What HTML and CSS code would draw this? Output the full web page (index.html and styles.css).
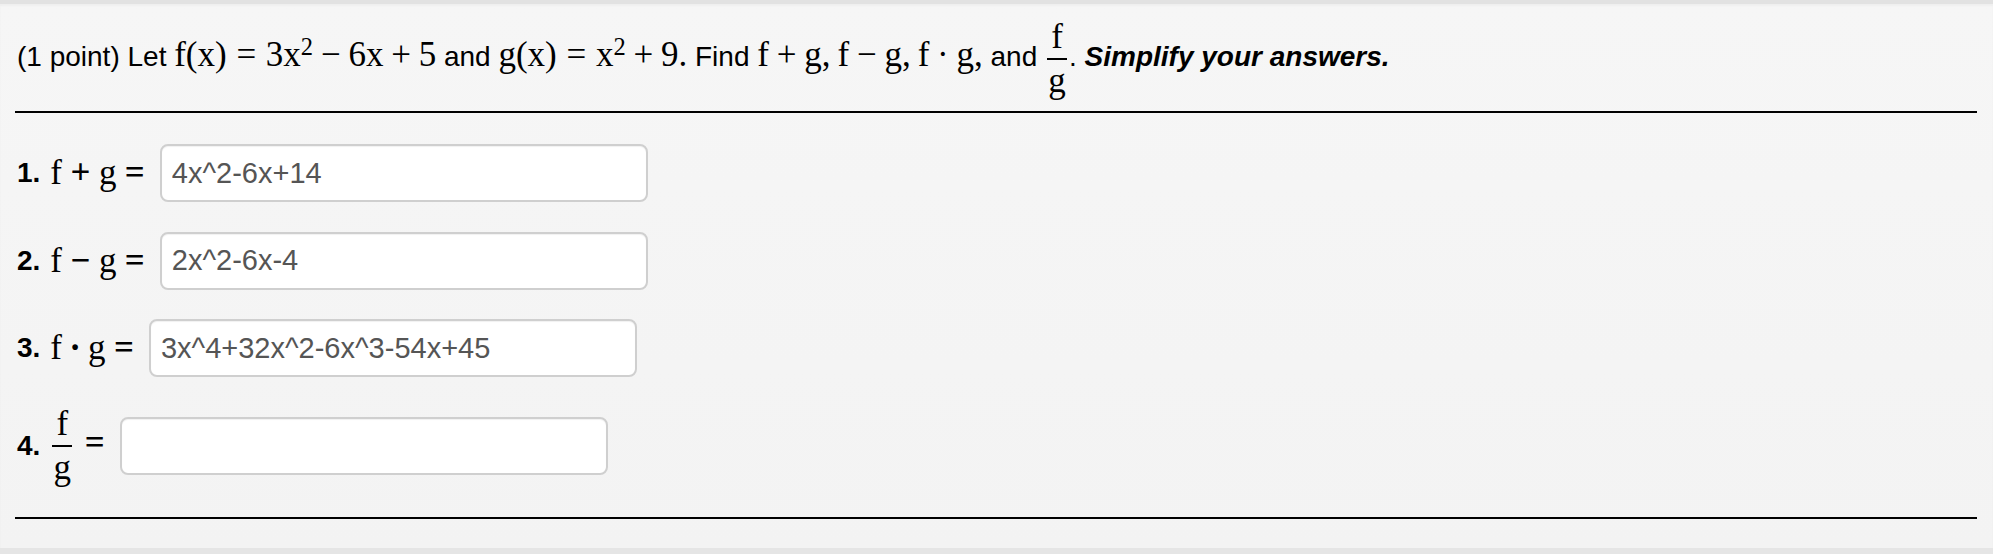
FILE: index.html
```html
<!DOCTYPE html>
<html lang="en">
<head>
<meta charset="utf-8">
<title>Problem</title>
<link rel="stylesheet" href="styles.css">
</head>
<body>
<div class="page">
  <div class="problem">
    <p class="question">(1 point) Let <span class="m">f(x)<span class="rel">=</span>3x<sup>2</sup><span class="bin">−</span>6x<span class="bin">+</span>5</span> and <span class="m">g(x)<span class="rel">=</span>x<sup>2</sup><span class="bin">+</span>9.</span> Find <span class="m">f<span class="bin">+</span>g,<span class="th"></span>f<span class="bin">−</span>g,<span class="th"></span>f<span class="bin">·</span>g,</span> and <span class="frac"><span class="num">f</span><span class="bar"></span><span class="den">g</span></span>. <b class="bi">Simplify your answers.</b></p>
    <hr class="rule top">
    <div class="answers">
      <div class="row">
        <span class="label"><b class="n">1.</b><span class="m">f<span class="bin">+</span>g<span class="rel">=</span></span></span>
        <input class="answer" type="text" value="4x^2-6x+14">
      </div>
      <div class="row">
        <span class="label"><b class="n">2.</b><span class="m">f<span class="bin">−</span>g<span class="rel">=</span></span></span>
        <input class="answer" type="text" value="2x^2-6x-4">
      </div>
      <div class="row">
        <span class="label"><b class="n">3.</b><span class="m">f<span class="bin dot">·</span>g<span class="rel">=</span></span></span>
        <input class="answer" type="text" value="3x^4+32x^2-6x^3-54x+45">
      </div>
      <div class="row">
        <span class="label"><b class="n">4.</b><span class="m"><span class="frac"><span class="num">f</span><span class="bar"></span><span class="den">g</span></span><span class="rel">=</span></span></span>
        <input class="answer" type="text" value="">
      </div>
    </div>
    <hr class="rule">
  </div>
</div>
</body>
</html>
```

FILE: styles.css
```css
html, body {
  margin: 0;
  padding: 0;
}

body {
  background: #f4f4f4;
  font-family: "Liberation Sans", Arial, Helvetica, sans-serif;
  color: #000;
}

.page {
  border-top: 4px solid #e2e2e2;
  border-bottom: 6px solid #e5e5e5;
  background: linear-gradient(#f6f6f6, #f3f3f3);
  box-shadow: inset 0 2px 2px rgba(0, 0, 0, 0.03);
}

.problem {
  padding: 16px 16px 29px 15px;
}

.question {
  margin: 0;
  font-size: 28px;
  line-height: 31px;
  padding-left: 2px;
  white-space: nowrap;
}

.m {
  font-family: "Liberation Serif", "Times New Roman", serif;
  font-size: 35px;
}

.m sup {
  font-size: 0.7em;
  line-height: 0;
  vertical-align: 0.45em;
}

.bin {
  margin: 0 0.222em;
}

.rel {
  margin: 0 0.278em;
}

.th {
  display: inline-block;
  width: 0.2em;
}

.frac {
  display: inline-flex;
  flex-direction: column;
  align-items: center;
  vertical-align: middle;
  font-family: "Liberation Serif", "Times New Roman", serif;
  font-size: 35px;
  margin: 0 2px;
}

.frac .num,
.frac .den {
  line-height: 34px;
}

.frac .bar {
  align-self: stretch;
  height: 2px;
  margin: 4px 0;
  background: #000;
  min-width: 20px;
}

.bi {
  font-weight: bold;
  font-style: italic;
}

.rule {
  margin: 0;
  border: 0;
  border-top: 2px solid #000;
  height: 0;
}

.rule.top {
  margin-top: 13px;
}

.answers {
  display: flex;
  flex-direction: column;
  gap: 29.5px;
  padding: 31px 0 32px 0;
}

.row {
  display: flex;
  align-items: center;
}

.label {
  display: inline-flex;
  align-items: center;
  font-size: 28px;
  padding-left: 2px;
  margin-right: 15px;
  white-space: nowrap;
}

.label .n {
  font-weight: bold;
  margin-right: 10px;
}

.label .m .bin {
  margin: 0 8.5px;
  font-family: "Liberation Serif", "Times New Roman", serif;
  font-weight: bold;
  font-size: 35px;
}

.label .m .bin.dot {
  margin: 0 7.2px;
}

.label .m .rel {
  margin: 0 0 0 8.4px;
  font-family: "Liberation Serif", "Times New Roman", serif;
  font-weight: bold;
  font-size: 35px;
}

.label .frac {
  margin: 0 4px 0 2px;
}

.answer {
  box-sizing: border-box;
  width: 488px;
  height: 58px;
  margin: 0;
  padding: 0 10px;
  border: 2px solid #cfcfcf;
  border-radius: 8px;
  background: #fff;
  box-shadow: inset 0 1px 1px rgba(0, 0, 0, 0.06);
  font-family: "Liberation Sans", Arial, Helvetica, sans-serif;
  font-size: 29px;
  color: #555;
  outline: none;
}
```
